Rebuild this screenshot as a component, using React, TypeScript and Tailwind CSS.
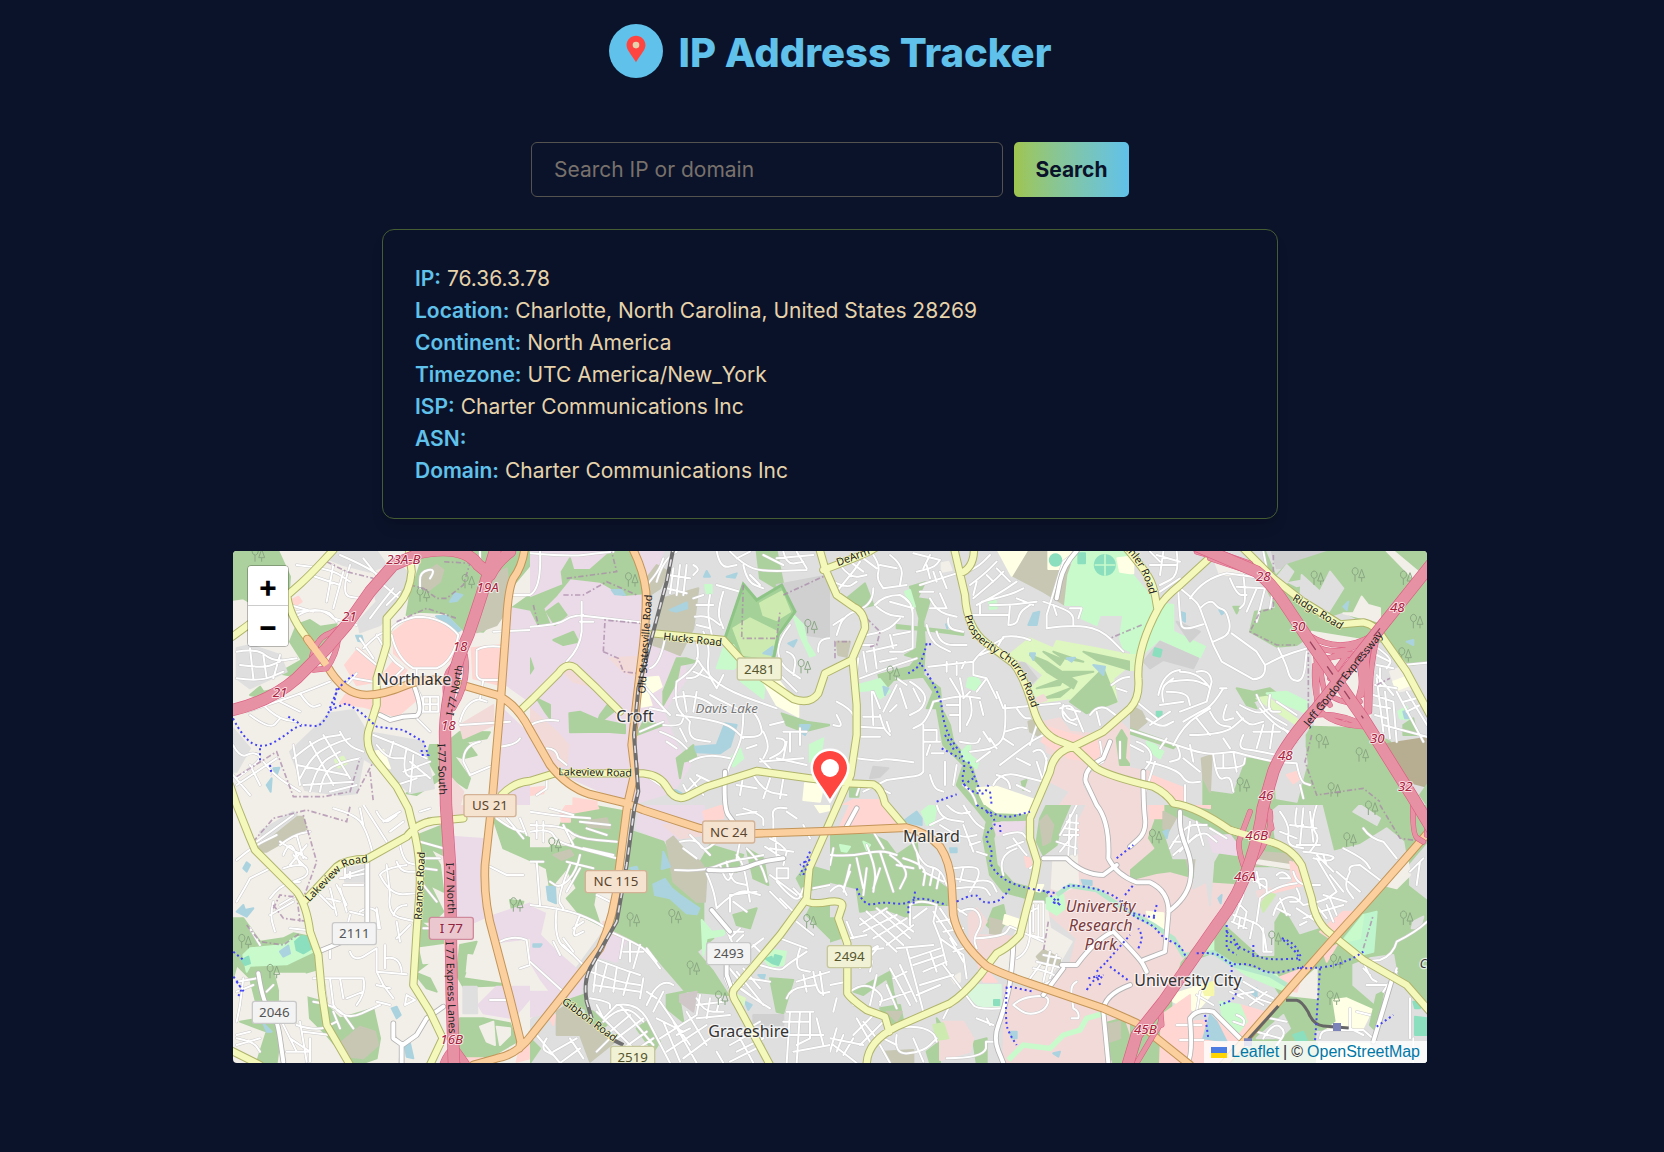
import React from "react";

const DETAILS: { label: string; value: string }[] = [
  { label: "IP:", value: "76.36.3.78" },
  { label: "Location:", value: "Charlotte, North Carolina, United States 28269" },
  { label: "Continent:", value: "North America" },
  { label: "Timezone:", value: "UTC America/New_York" },
  { label: "ISP:", value: "Charter Communications Inc" },
  { label: "ASN:", value: "" },
  { label: "Domain:", value: "Charter Communications Inc" },
];

/* Land colours of the map style */
const FOREST = "#add19e";
const HOMES = "#dfdfdf";
const LAND = "#f2efe9";
const INDUSTRY = "#ebdbe8";
const RETAIL = "#ffd6d1";
const OFFICE = "#f2dad9";
const PARK = "#c8facc";
const TEAL = "#8cdfbe";
const GOLF = "#def6c0";
const BARREN = "#c7c7b4";
const WATER = "#aad3df";
const SCHOOL = "#ffffe5";

type Tile = { x: number; y: number; base: string; areas: [string, string][]; streets: string };

/* The map is cut in eight tiles of 900 x 780 units; each has its own origin. */
const TILES: Tile[] = [
  {
    x: 0, y: 0, base: LAND,
    areas: [
      [FOREST, "M0 18H145L180 95 175 160 130 170 90 158 60 172 40 160 0 165Z"],
      [FOREST, "M550 18H900V60L850 120 830 180 760 260 700 255 650 205 570 200 530 210 540 150 570 60Z"],
      [FOREST, "M180 290L200 240 240 225 270 245 320 238 250 330 250 350 200 395 145 385 215 345Z"],
      [FOREST, "M60 450L90 425 100 440 150 430 110 460Z"],
      [FOREST, "M530 745L620 690 590 640 600 600 640 600 690 560 780 562 770 580 710 590 740 630 700 640 670 630 720 700 710 730 650 690 560 750Z"],
      [FOREST, "M830 200L900 150V270L840 330 870 260Z"],
      [BARREN, "M570 95L620 60 640 75 630 110 590 140 575 120Z"],
      [BARREN, "M790 90L830 70 840 180 800 240 740 262 740 190Z"],
      [HOMES, "M300 18H440L470 60 420 80 340 60 290 40Z"],
      [HOMES, "M430 130L510 60 540 90 520 170 450 240 390 262 385 230 440 170Z"],
      [HOMES, "M20 310L60 300 150 330 170 380 60 430 20 400Z"],
      [HOMES, "M180 620L300 505 370 495 410 560 580 590 612 730 540 745 480 690 400 640 380 745 330 750 225 735Z"],
      [HOMES, "M9 550L60 610 20 680 9 680Z"],
      [RETAIL, "M490 262L540 222 620 225 682 270 672 335 625 370 540 368 492 325Z"],
      [RETAIL, "M345 360L385 310 440 360 430 412 380 420Z"],
      [RETAIL, "M330 475L350 445 400 460 560 420 562 462 500 515 450 500 400 485Z"],
      [RETAIL, "M450 400L490 350 530 375 500 420Z"],
      [RETAIL, "M725 310L815 300 810 420 730 400Z"],
      [RETAIL, "M175 170L205 155 215 170 190 185Z"],
      [INDUSTRY, "M845 190L900 200V470L830 420Z"],
      [INDUSTRY, "M815 490L900 570V780H790Z"],
      [OFFICE, "M690 540L790 480 790 540 700 580Z"],
      [OFFICE, "M665 700L700 740 690 780H665Z"],
      [WATER, "M618 214L650 212 692 255 680 262Z"],
      [WATER, "M660 170L675 145 697 150 680 168Z"],
      [WATER, "M378 272L395 272 400 290 385 288Z"],
      [WATER, "M110 720L125 700 122 740Z"],
      [WATER, "M130 670L148 668 140 690Z"],
      [SCHOOL, "M430 620L460 615 480 670 450 660Z"],
      [GOLF, "M315 645L340 635 350 655 325 668Z"],
    ],
    streets:
      "M200 60L300 70 360 110 M310 60L290 170 M340 80L310 190 M240 90L330 120 M360 60L330 150 390 160 M400 40L440 90 M330 30L400 60 460 100 " +
      "M190 220Q260 170 310 220L380 240 M200 200L290 190 320 230 M180 180L250 200 M420 220L450 180 490 130 M470 180L510 140 M460 120L520 170 " +
      "M400 310L440 270 470 260 M390 280L430 340 M380 310L440 360 M20 320L80 310 130 350 200 340 M30 360L100 370 150 350 M60 310L70 400 M100 330L110 400 M20 400L90 410 160 380 M150 330L130 400 " +
      "M50 500L110 480 200 450 300 410 M60 510L120 555 150 520 M100 480L140 520 200 530 M150 470L210 500 M210 445L240 490 270 480 M380 385L340 430 M370 400L430 410 M480 260Q490 230 560 215Q640 215 685 270Q670 350 620 370L550 370Q500 340 485 270 " +
      "M440 270L480 340 520 370 M520 370L470 420 M560 370L560 430 Q600 500 560 512L520 515 480 525 450 510 M580 455H625V500H580Z M600 455V500 M580 478H625 M560 520L600 560 " +
      "M190 640L260 580 330 570 M210 700L240 640 300 600 360 580 M240 740L260 660 330 620 M270 740L280 680 340 650 390 640 M200 660L350 690 M190 600L210 720 M240 590L310 720 M280 570L360 700 M330 560L350 600 400 620 M220 720L370 710 M300 740L380 720 " +
      "M430 570L480 590 530 610 590 640 M440 600L470 640 520 640 M490 590L480 630 M530 610L510 700 590 690 M540 650L600 700 M550 630L540 740 M520 680L600 650 M500 720L560 700 " +
      "M740 320V390Q745 405 760 405H810 M740 315Q760 300 815 305 M690 530L700 490 740 460 770 470 M760 405L750 460 M690 540L840 530 M750 590Q700 600 700 650L720 690 780 665 M870 580Q860 600 810 605 " +
      "M9 600L30 640 70 620 100 640 20 700 M20 720L140 640 M60 660L90 720 M100 650L130 690 210 740 M9 690L60 750 M750 20V80 M850 150H900 M600 100L620 70 570 80 570 130 M790 260L900 255",
  },
  {
    x: 900, y: 0, base: HOMES,
    areas: [
      [INDUSTRY, "M0 18H320L400 18 350 160 360 300 460 340 470 400 400 500 440 600 480 660 430 740 300 780H0Z"],
      [FOREST, "M95 80L120 40 130 75 180 75 245 18H305L325 60 345 145 280 150 210 110 120 100 80 150 40 190 60 240 25 240 0 190V160L100 120Z"],
      [FOREST, "M50 200L85 175 110 210 75 240Z"],
      [FOREST, "M70 285L130 260 145 290 100 300Z"],
      [FOREST, "M0 340L10 370 0 385Z"],
      [FOREST, "M118 505L150 500 200 522 285 540 285 565 230 560 120 562Z"],
      [FOREST, "M240 470L250 500 200 540 210 510Z"],
      [FOREST, "M20 460L60 480 60 520 45 500Z"],
      [FOREST, "M440 340L470 340 500 350 450 360 440 410 400 480 400 440Z"],
      [FOREST, "M440 640L490 600 500 640 460 650 450 700Z"],
      [FOREST, "M680 18H740L760 120 740 130 690 100 Z"],
      [FOREST, "M755 505L830 530 900 540 820 560 770 540Z"],
      [FOREST, "M320 570L400 540 340 530Z"],
      [BARREN, "M400 160L505 130 490 250 450 330 400 310 370 300Z"],
      [BARREN, "M350 100L380 60 415 80 390 130 360 150Z"],
      [OFFICE, "M0 490L80 560 115 600 110 660 60 670 0 560Z"],
      [OFFICE, "M90 370L130 365 170 420 130 410Z"],
      [OFFICE, "M240 340L320 335 310 390 280 380Z"],
      [LAND, "M0 700L110 700 200 740 300 780H0Z"],
      [RETAIL, "M0 730L45 725 40 745 0 750Z"],
      [RETAIL, "M130 760L200 770V780H130Z"],
      ["#d0d0d0", "M740 120L900 90V280L830 270 790 210Z"],
      ["#a3d197", "M585 280L640 118 680 165 755 120 795 200 745 270 730 345 640 335Z"],
      ["#cdebb0", "M690 175L755 140 780 200 740 225 700 210Z"],
      ["#cdebb0", "M610 250L660 220 740 260 720 340 640 330Z"],
      [PARK, "M560 370L580 310 610 300 640 350 610 372Z"],
      [PARK, "M632 408H705L700 460Z"],
      [PARK, "M790 210L820 240 830 290 855 330 840 335 810 270Z"],
      [PARK, "M525 120L545 120 545 145 530 145Z"],
      [PARK, "M600 640L630 610 640 640 610 665Z"],
      [PARK, "M840 600L880 580 870 640 840 650Z"],
      [SCHOOL, "M700 410L745 405 805 480V515L740 480Z"],
      [SCHOOL, "M335 400L385 395 395 425 355 450 365 480 335 485Z"],
      [SCHOOL, "M825 715L880 720 870 770 820 765Z"],
      [WATER, "M495 605L560 600 585 535 620 540 600 605 570 625 500 622Z"],
      [WATER, "M420 195L470 172 472 190 440 200Z"],
      [WATER, "M245 135L275 135 285 150 255 148Z"],
      [WATER, "M810 540L840 540 825 570 810 560Z"],
      [WATER, "M522 95L530 78 540 95ZM590 95L620 85 615 98ZM775 295L800 285 790 305ZM700 325L728 305 725 330Z"],
      [WATER, "M435 735L455 745 440 755Z"],
    ],
    streets:
      "M0 25L120 35 200 25 250 20 M30 20Q35 130 0 150 M0 245L80 240 120 215 160 210 M155 170L155 260Q150 310 110 350 M150 230H190 M160 212L330 232 M0 540Q40 520 85 527 M50 610Q80 610 85 640L110 660 " +
      "M415 90L480 100 M410 130L470 145 M430 70L420 145 M450 60L440 150 M470 60L460 150 M380 110Q400 40 440 20 M355 115L385 80 400 40 M490 60L510 70 490 90 " +
      "M560 18L570 70 620 60 M600 20L640 60 700 80 830 75 M640 60L650 110 700 130 M660 90L690 120 M620 40L660 20 M700 30L760 60 M760 20L770 60 820 50 M800 20L830 70 M740 40L850 30 " +
      "M495 215L530 210 570 240 M500 180L550 180 M540 150L530 200 550 290 M580 140L560 200 580 250 M560 120L630 140 M520 260L540 300 530 380 560 430 M490 160L520 150 M500 240L540 250 " +
      "M405 280Q390 360 360 370 M500 290L510 340 480 380 440 410 M440 410L430 480 480 530 M500 340L530 390 600 440 740 490 M470 400L500 400 520 370 M490 380L540 400 M560 430L580 390 " +
      "M430 460L460 450 520 460 560 490 500 500 M460 440L470 500 M500 440L490 500 M540 450L600 480 640 500 M440 510L520 520 600 540 640 580 M480 530L470 580 540 590 M450 550L470 590 " +
      "M340 420L400 490 420 510 M360 490L410 500 M390 560L440 580 470 610 M400 540L450 545 460 520 M410 590L440 610 M330 560L400 530 " +
      "M640 500L640 570 610 640 590 680 580 770 M640 575L700 580 690 530 670 500 M700 560L720 600 700 640 M680 600L650 610 M720 540L760 530 M740 580L770 580 760 620 720 640 M760 560H830 M770 590L760 640 M810 550V600 M740 640L830 660 M690 640L740 690 M780 560V620 " +
      "M460 720L480 760 M480 700L520 750 M500 690L560 720 M470 740L510 700 M640 690L630 750 M670 690L700 740 770 750 M720 700L700 760 M620 720L680 730 M760 700L750 760 " +
      "M780 240L740 290 750 360 810 400 M770 320L800 330 790 390 M740 380L800 440 M865 320Q860 280 900 280 M690 650L820 640 M480 650Q530 620 600 640 M50 700V730L20 750 M360 700Q420 740 450 760",
  },
  {
    x: 1800, y: 0, base: HOMES,
    areas: [
      [FOREST, "M50 160L105 115 130 180 90 190Z"],
      [FOREST, "M240 125L285 112 262 160 300 165 280 230 285 300 280 390 330 430 335 490 360 540 370 590 425 660 442 720 480 780H430L380 720 400 660 340 600 320 490 290 490 310 440 280 395 190 405 160 440 145 390 240 365 260 340 225 330 260 310 268 220Z"],
      [FOREST, "M200 240L400 262V270L280 255 200 250Z"],
      [PARK, "M85 420L150 402 180 440 150 460 130 435 90 438Z"],
      [PARK, "M395 620L420 595 420 630 445 650 440 670 400 640Z"],
      [PARK, "M415 400L440 395 452 415 435 435 410 425Z"],
      [PARK, "M475 160L495 150 500 190 480 192Z"],
      [PARK, "M225 140L240 135 255 185 240 180Z"],
      ["#d0d0d0", "M120 700L130 665 175 670 150 695Z"],
      ["#d0d0d0", "M580 350L620 400 600 420 560 360Z"],
      [BARREN, "M545 90L590 18H660L700 60 720 60 705 180 640 140Z"],
      [BARREN, "M595 530L630 520 630 575 600 560Z"],
      [SCHOOL, "M505 18H590L545 92Z"],
      [SCHOOL, "M655 18H725L700 72H655Z"],
      [PARK, "M740 18H900V318L880 310 870 280 880 210 810 210 800 240 755 220V180L705 180 715 90Z"],
      [TEAL, "M745 25H765V55H745ZM825 30A30 30 0 1 1 824 30ZM677 28A17 17 0 1 1 676 28Z"],
      [SCHOOL, "M862 40L900 35V85L870 80Z"],
      [GOLF, "M530 335L600 280 670 310 680 288 800 310 900 330V360L850 400 860 470 780 500 720 460 630 472 605 430 640 390 590 350Z"],
      [FOREST, "M600 330L650 350 740 410 730 430 650 380ZM670 320L760 350 700 340ZM620 430L700 400 690 420ZM640 460L720 430 690 455ZM760 320L900 350V375L800 345ZM720 470L820 370 860 470 770 505ZM700 380L790 380 700 400ZM640 320L700 345 690 360Z"],
      [OFFICE, "M640 530L690 520 720 560 830 570 870 530 900 560V780H690L720 740 660 710 690 640 650 620Z"],
      [RETAIL, "M635 590L650 545 730 570 800 585 812 620 790 650 720 640Z"],
      [FOREST, "M860 580L875 555 890 580 885 640 900 660 870 660Z"],
      [OFFICE, "M610 465L640 450 650 465 620 475Z"],
      [SCHOOL, "M440 730L500 725 615 765 600 780H465Z"],
      [FOREST, "M575 710L590 705 580 735ZM60 730L90 725 85 755 60 755Z"],
      [LAND, "M335 55L355 50 365 75 335 80Z"],
      [BARREN, "M20 290L60 290 50 335 25 330Z"],
      [RETAIL, "M40 780L70 765 150 765 180 780Z"],
      [WATER, "M595 240L610 205 628 200 620 240ZM600 325L615 325 610 345ZM790 360L825 365 820 390ZM710 340L735 338 725 350ZM348 238L358 240 352 250ZM160 425L175 430 165 450Z"],
    ],
    streets:
      "M130 30L150 60 140 100 160 130 M100 40L140 70 M30 60L60 100 110 90 M10 110L50 130 80 110 M20 140L70 80 90 50 M130 130L130 180 40 210 20 270 M160 130L230 120 M180 30L220 60 210 120 M150 60L200 70 M60 50L100 80 " +
      "M140 185L170 210 220 215 M135 180Q160 150 210 150Q250 170 248 210V310L220 320 M180 170L250 190 M240 260L190 270 M220 320L180 320 M250 25L330 45 M260 80L310 70 330 45 M270 120L380 85 M300 30L280 70 M330 80L350 130 M310 80L320 110 M290 60L300 100 " +
      "M390 90L440 70 480 30 M420 120L460 90 500 50 M430 160L490 110 520 80 M440 180L500 150 560 110 M470 90L490 110 M500 70L540 110 M440 110L430 150 M455 170L540 150 580 130 M480 180L540 180 620 170 M560 160L610 180 M540 180L535 240 M415 210H535 M540 240L560 240 570 200 600 180 M450 180V210 " +
      "M300 160L320 200 380 215 M330 145L350 190 M300 190L350 190 M290 240L300 290 360 320 M320 260L330 300 410 300 M270 140L310 140 M355 220L350 250 400 260 M430 350L450 320 520 280 M430 350V390L470 400 490 440 500 460 M295 365L430 350 M350 350V380 M380 350V390 M405 350L395 370 M390 400L400 450 M310 470L390 450 450 460 M360 400L390 450V560 M420 440L400 460 " +
      "M450 330L500 310 520 275 Q570 270 600 285 M470 400L440 440 M350 480H385 M420 460L430 500 410 540 M450 470L460 510 M360 510H390 M520 490L500 440 M525 480L530 560 500 610 420 620 M525 490L690 475 M560 490L580 520 600 520 M525 560L570 545 590 550 M480 580L500 610 M460 560L480 590 M390 590L440 600 450 580 M440 650L480 620 M520 580L550 600 " +
      "M90 400L170 370 260 340 M85 340L80 380 M100 320L110 380 M130 300L140 370 M150 350L200 340 M110 270L170 260 210 220 M110 320L200 300 M180 270L190 310 M85 300L130 300 " +
      "M130 440L150 490 M160 500L200 420 M180 500L200 480 M210 430L230 490 M240 410L290 440 280 490 240 510 M250 430L270 470 M20 470L60 490 80 530 M10 540L40 550 20 510 M100 515H150 M125 440L130 540 M90 545L160 550 M95 575H150 M150 510L160 550 180 570 M170 530L180 560 M200 400L230 420 " +
      "M310 470L290 530 250 550 M280 540V680Q270 695 240 695L170 705 100 740 M280 555H320V590 M280 590H330 M300 600L290 630 M305 625L340 625 M80 640L150 650 160 640 250 652 M345 650V720 M380 660L370 720 M300 690L310 730 340 740 M80 750L90 720 M110 710L180 745 M400 720Q430 740 440 780 " +
      "M640 170L700 190 730 210 730 240 M670 180L680 210 M650 250V210L690 80 700 50 740 20 M650 250L720 240 810 250 880 320 M620 540L600 600 M510 660L600 590 640 570 M490 720Q510 680 560 690L640 710 620 650 M610 620Q640 600 650 650V690 M500 690Q540 700 540 730 M560 720L600 740 M560 640L600 660 M640 700L650 640 " +
      "M690 490Q720 470 735 500L760 560 M700 500L720 530 740 520 M700 480L690 520 740 540 M710 490L750 500 M780 510Q800 480 830 490L870 520 M800 500L810 540 M845 420L870 400 900 395 M860 430L890 440 M720 190H755L745 220 M810 590L820 650Q760 680 765 720Q780 750 800 780 M870 590V640 M40 220L10 240",
  },
  {
    x: 2700, y: 0, base: HOMES,
    areas: [
      [PARK, "M0 80L50 140 90 175 130 180 130 260 225 305 210 337 90 282 40 325 0 325Z"],
      ["#d0d0d0", "M90 290L205 340 190 370 100 345 60 370 40 350ZM180 290L140 230 210 260Z"],
      [LAND, "M255 50L340 80 340 90 270 90Z"],
      [FOREST, "M405 18L440 100 500 130 640 100 620 160 560 220 620 240 700 230 750 240V290L640 310 560 260 500 300 440 305 360 260 375 200 440 190 410 130Z"],
      ["#d0d0d0", "M425 18H600L540 60 440 70Z"],
      [FOREST, "M600 18H900V350L840 360 770 290 740 250 640 200 580 220 510 170 520 100 460 110 430 100 470 60Z"],
      [HOMES, "M515 90L570 140 600 80 640 130 590 210 510 180Z"],
      [HOMES, "M430 110L470 60 490 80 460 130Z"],
      [LAND, "M640 205L670 205 695 155 715 180 750 190 750 230 700 220Z"],
      [LAND, "M545 260L730 290 720 530 555 560Z"],
      [LAND, "M780 380L830 360 860 430 800 440Z"],
      [SCHOOL, "M790 410L830 395 840 420 800 435Z"],
      [LAND, "M770 18H790L870 85 850 100Z"],
      [FOREST, "M320 430L370 440 420 430 440 445 370 470 380 490 350 480Z"],
      [PARK, "M410 445L470 440 530 470 530 505 460 475Z"],
      [GOLF, "M380 460L410 455 510 530 500 540Z"],
      [BARREN, "M0 480L35 500 50 530 20 555 0 545Z"],
      [FOREST, "M0 550L140 600 130 610 0 565Z"],
      [FOREST, "M545 545L700 550 780 590 850 780H385L430 660 530 650 530 570Z"],
      [FOREST, "M350 640L425 650 390 780H220V640L240 740 310 750Z"],
      [BARREN, "M215 640L245 630 240 740 220 700Z"],
      [HOMES, "M430 600L525 610 530 655 500 770 440 760Z"],
      [RETAIL, "M470 690L500 680 510 700 490 715Z"],
      ["#b7ae91", "M765 598L891 578V725L840 712Z"],
      [FOREST, "M870 750L891 720V780Z"],
      [OFFICE, "M0 670L60 680 40 780H0Z"],
      [RETAIL, "M60 690L165 730 160 775 110 760 50 720Z"],
      [GOLF, "M0 330L20 330 15 375 0 375Z"],
      [SCHOOL, "M0 18L10 30 10 85 0 85Z"],
      [PARK, "M50 590L75 600 100 620 90 640 60 620ZM805 500L830 485 840 525 810 520Z"],
      [FOREST, "M820 540L850 520 860 570 820 570ZM310 185L330 185 320 205Z"],
      [WATER, "M150 200L165 205 165 230 152 220ZM640 185L655 170 650 195ZM830 290L850 285 850 300ZM820 500L838 495 835 520 825 520ZM268 195L285 200 275 208Z"],
      [TEAL, "M75 310L95 315 90 335 70 330ZM80 500L95 500 95 518 80 518Z"],
    ],
    streets:
      "M80 30L150 50 M60 60L140 60 M100 20L90 90 M140 20L150 90 90 120 M60 20L90 50 M90 140L150 100 M145 140L150 230 160 255 220 238 M150 130L200 170 210 190 M210 190L240 160 265 190 290 195 305 265 250 290 M210 190L250 300 275 350 370 403Q410 400 405 360L380 320 305 265 M180 160Q220 100 290 85L400 100 M320 125L400 130 M340 90L350 170 330 190 M380 130L350 200 M405 130L380 230 M300 100L320 150 350 150 M430 130L420 190 M405 360L450 335 530 310 M445 310L470 360 480 405 520 410 530 320 " +
      "M85 450Q100 380 150 375 M100 470L90 430 130 400 M120 410L180 400 230 420 M200 380Q240 370 245 410L230 470 150 500 M150 380Q210 380 240 430 M110 440L170 440 180 480 M90 480L160 470 M60 540L120 500 M270 430H290 M280 430L250 480 210 500 160 530 M50 520L90 550 130 530 M130 600L160 540 240 490 M180 570L280 570 340 520 M200 520L240 570 M240 500L260 540 300 545 M290 480L270 530 310 520 M330 480L380 510 420 490 M320 500L350 545 400 530 M380 450L400 500 470 540 M420 450L410 500 450 500 M440 470L500 510 M390 490L430 540 500 570 M370 560L450 560 M400 540L380 610 M430 540L420 610 M340 570L320 610 370 615 440 630 M460 550L500 590 M280 580L300 610 " +
      "M20 470L80 520 M0 555L140 600 230 630 310 620 M310 620L420 650 500 655 M250 630L260 710 300 690 310 740 M260 670L340 670 345 640 M280 630V670 M310 620L320 680 M20 590L50 600 70 640 40 680 M0 600L40 620 M50 650L140 670 170 715 210 710 M140 600L160 640 120 650 M160 640L210 680 M75 650L40 760 M180 600L190 650 M90 610L110 580 M165 720V780 " +
      "M500 655L510 710 540 720 M510 720L520 760 M730 300L790 340 770 370 M740 330L780 350 M740 360L790 370 M820 360L891 353 M740 390L790 450 M735 420L800 430 M730 450L790 470 M730 480L780 490 M735 510L770 520 M740 400L760 560 M765 440L780 580 M790 470L800 590 M800 440L880 590 M760 540L891 575 M830 440L891 540 M820 470L860 460 M830 500L870 480 M750 370V420 M400 20L410 70",
  },
  {
    x: 0, y: 780, base: LAND,
    areas: [
      [FOREST, "M9 340L40 340 90 410 160 400 190 385 240 395 270 520 280 590 330 640 430 610 450 700 440 760 400 774H360L290 690 240 640 230 500 130 500 160 620 140 774H80L110 680 30 650 90 640 60 520 20 480 9 520Z"],
      [PARK, "M40 450L60 430 160 420 200 395 240 400 250 440 170 478 60 482 50 500Z"],
      [TEAL, "M195 410L215 393 240 398 245 430 220 445 200 435ZM35 465L55 455 60 475 45 480Z"],
      [WATER, "M150 440L175 422 180 445 160 455ZM20 320L40 300 45 315 70 310 50 335ZM40 190L50 172 60 180 50 200ZM485 610L500 605 512 630 500 640ZM525 725L540 715 550 760 530 755ZM100 655L125 680 110 680ZM690 425L708 425 705 435 690 432Z"],
      [BARREN, "M70 140L200 35 218 35 230 72 110 140Z"],
      [BARREN, "M330 715L390 665 435 680 445 720 400 760 360 755Z"],
      [HOMES, "M90 80L190 20 200 30 100 110ZM345 190L410 180 410 230 345 230Z"],
      [LAND, "M225 510L260 500 265 580 230 570ZM150 560L230 620 180 700 150 680Z"],
      [FOREST, "M565 90L640 60 640 150 600 130 630 180 640 260 600 240 640 320 610 350 570 350 640 400V440L560 500 570 400 560 300Z"],
      [FOREST, "M550 500L600 520 620 560 590 550ZM690 420L740 410 700 520 840 540 700 545 680 510ZM690 640L760 640 840 655 860 710 750 774H690ZM840 285L880 290 870 320 845 310ZM790 40L900 100V165L820 130Z"],
      [LAND, "M570 430L640 420 640 470 580 475ZM715 450L790 460 740 515 710 500ZM750 665L790 650 795 720 770 710ZM800 665L840 670 840 690 810 720Z"],
      [INDUSTRY, "M665 95L760 102 755 230 780 330 680 375ZM780 335L900 295V400L800 412ZM745 600L800 545 900 545V580L850 640 760 625Z"],
      [OFFICE, "M665 0H700V30L665 45Z"],
      [HOMES, "M700 545L740 545 742 625 700 625Z"],
      [RETAIL, "M870 730L900 710V760L860 770ZM700 760L760 760V774H700Z"],
    ],
    streets:
      "M20 165L60 130 140 90 M80 110L190 30 M20 290Q50 240 60 220L120 190 M150 120L190 90 240 80 M160 150L180 100 210 180 M180 180L230 120 M190 150L230 190 M150 110L230 160 M160 190L220 170 240 210 190 230 M200 90L220 160 " +
      "M120 280L150 240 210 230 M130 290L120 330 135 380 M120 330L190 290 M180 370L230 375 M150 300L200 270 M310 10L380 30 410 80 430 150 M390 10L400 60 M400 0L470 110 M440 20L460 60 500 30 M460 50L510 20 M480 80L520 50 M510 120L520 170 560 180 M540 60L600 40 M570 20L600 10 " +
      "M412 170V400 M340 240L400 240 M330 220L410 205 M360 220V200 M300 250L320 330 M270 270L310 310 M290 280L330 290 M320 240L350 300 M345 170V220 M350 210L410 190 M330 250L350 320 M390 320Q420 300 440 320L445 370 M450 210L480 270 560 265 M470 180L480 270 M500 170L510 200 560 200 M450 210Q460 190 530 180 M480 270L470 330 560 350 M490 330Q500 300 530 300 M500 350L510 410 M500 400L540 360 " +
      "M360 320L400 330 M360 330L350 370 M440 310L450 370 M265 440L350 405 M360 440Q370 470 400 455L440 430 440 500 530 508 M465 420V490 M465 460Q510 450 515 500 M440 500L460 540 M300 430V460 M250 520L400 520Q410 560 380 600 M300 520L310 600 M330 520L340 580 M250 590L320 600 370 670 M310 600L340 650 450 600 M350 580L400 560 M280 530L290 590 M460 540L490 580 M440 540L480 550 M440 590L480 600 M525 600L530 570 555 585Z " +
      "M85 505L100 600 140 630 160 770 M20 530L80 520 M20 560L70 540 M110 560L130 540 M30 600L20 650 M40 520L30 600 M110 620L150 590 M150 640L200 740 M210 650L230 770 M200 660L260 680 320 650 M220 680L300 690 M310 620L330 670 M180 700L240 740 M170 740H240 M20 700L70 710 90 740 M20 690L60 680 M240 700V770 M20 720L90 700 " +
      "M490 655L490 700 520 720 560 690 590 640 640 605 M515 720L510 774 M570 160H630 M580 190L620 195 M570 110L640 130 M580 240L620 290 M580 370H640 M780 185L830 210H880 M810 410Q850 390 890 405L900 480 870 490 M780 585H840 M800 40L840 70 880 80 M830 40L880 100 M870 40L890 90 M60 370L90 420",
  },
  {
    x: 900, y: 780, base: HOMES,
    areas: [
      [LAND, "M0 0H290L260 190 220 370 80 560 0 640Z"],
      [FOREST, "M100 40L180 0 290 20 260 190 200 240 190 300 210 360 150 330 110 280 140 250 110 190 60 250 50 190 0 165V130L60 130Z"],
      [RETAIL, "M92 25L110 0H200L205 10 120 25 120 50 95 50Z"],
      [BARREN, "M70 150L120 135 130 150 95 165ZM160 50L230 40 240 70 180 65Z"],
      [LAND, "M0 60L60 60 140 90 110 120 0 110Z"],
      [INDUSTRY, "M330 0H520L530 50 480 90 400 110 320 70ZM0 305L45 325 30 390 80 440 160 510 150 570 90 590 50 625 0 635V560L60 560 30 520 0 470ZM220 390L300 380 260 470 190 450Z"],
      [OFFICE, "M220 350L300 385 290 400 220 380ZM400 60L500 60 520 90 450 100Z"],
      [FOREST, "M310 80L400 110 440 190 520 280 520 380 550 400 500 440 550 500 595 570 465 558 380 460 300 400 240 370 280 240Z"],
      [FOREST, "M540 120L640 150 620 200 550 180 500 190ZM610 330L680 310 660 370 620 360ZM650 130L700 160 715 240 670 220ZM410 570L470 558 450 590 460 650 410 610ZM720 520L790 525 760 625 740 620ZM800 220L830 180 900 200V240L820 260ZM830 330L850 290 900 300V400ZM100 590L160 570 180 700 230 660 190 620ZM320 670L350 650 390 710 370 740ZM0 700L30 730 0 774Z"],
      [BARREN, "M410 110L430 95 460 130 510 170 530 200 525 290 500 290 430 230Z"],
      [BARREN, "M80 620L110 600 190 660 255 710 180 770 150 690 80 690Z"],
      ["#d0c8c8", "M450 570L500 560 490 620 450 590Z"],
      ["#d0d0d0", "M670 630H760V660H670Z"],
      [RETAIL, "M520 20L580 0 580 40 525 45ZM60 640L75 630 70 660Z"],
      [WATER, "M370 238L405 222 425 250 450 270 508 310 500 328 470 325 420 280 375 270ZM400 140L420 185 395 192ZM50 245L75 245 78 295 55 285ZM300 190L320 185 325 200ZM645 590L665 600 655 615ZM685 510L705 510 700 525ZM10 418L35 418 30 425 10 425Z"],
      [PARK, "M515 345L545 380 590 375 580 390 530 400 520 450ZM700 460L730 435 768 440 760 480 720 485Z"],
      [TEAL, "M708 462L725 455 728 475ZM735 450L755 455 745 480 728 475Z"],
      [GOLF, "M620 570L645 580 640 600Z"],
      [SCHOOL, "M855 0H900V15L870 22Z"],
    ],
    streets:
      "M0 60L100 60 140 100 260 110 M0 80L60 70 80 110 150 130 260 160 M20 50V100 M40 50V110 M60 10L130 30 M100 60L130 120 M150 50L240 60 M170 70L230 90 M0 20L60 30 180 40 M160 130L250 150 M110 170L190 190 M150 150L140 200 90 250 60 230 M20 170L30 300 M120 180L80 280 100 310 M150 190L110 260 M0 170H40 M0 300L100 310 200 350 240 380 M80 310L70 400 130 450 M150 330L120 400 160 380 M100 400L130 440 M70 410L90 450 M160 350L130 370 M200 270L240 290 M220 240L250 250 M0 470L100 560 M100 420L170 490 M590 20L600 50 640 50 M590 0L595 40 M640 10L700 30 700 60 M620 30L680 20 M730 100V40Q720 0 770 10 M735 80L740 160 M720 100Q760 120 770 140L760 180 M705 125L760 160 M740 190H775V220H740Z M770 20L800 40 " +
      "M435 195L520 200 590 170 650 160 700 150 M530 205L550 250 560 310 M450 110L500 100 520 140 560 110 M460 130L500 160 M480 90L540 150 M570 180L590 240 610 200 M590 170L600 230 650 240 M620 150L640 170 660 290 M560 310L620 250 690 270 M600 320V270L680 260 M545 315L600 380 620 470 M600 400L630 370 M650 130L690 170 710 230 M630 110L620 160 M550 200L590 200 M610 290L650 320 " +
      "M585 460V520L605 570 M590 380L640 380 M620 410L640 390 M660 430L700 400 M590 520L640 560 720 610 M620 500L700 600 M590 480L640 540 M640 490L690 550 M605 570L620 540 660 570 M650 520L720 530 M670 420L700 450 M690 480L750 500 770 480 830 440 M750 400L830 430 M800 350L850 390 M810 430L790 490 840 500 M720 260L770 310 M740 230L800 300 820 250 M790 250L830 290 M750 280L790 320 " +
      "M240 380L330 420 360 450 390 490 M280 400L270 460 M300 410V470 M330 420L310 490 M280 440L340 440 M350 430L380 470 M190 460L270 490 330 510 M180 500L260 530 330 540 M200 470L190 560 M230 480L210 560 M260 490L250 560 M300 500L280 570 M340 520L330 580 M190 540L330 560 M180 580L240 590 240 610 M200 600L220 640 260 600 Q320 590 350 640L420 774 M220 650L250 620 300 610 340 650 M240 680L300 630 M260 700L340 640 M280 730L350 680 M200 620L310 730 M270 600L370 720 M310 740L370 700 M350 600L370 560 Q400 520 430 540 M370 620L400 560 M350 560L380 580 M390 590L480 720 M400 650L450 770 M430 650L500 774 M470 620L530 720 M390 700L500 630 M410 740L530 660 M460 760L540 700 M440 690L480 670 M380 640L460 680 M500 580L520 620 580 620 M510 570L500 630 M540 580L530 640 M570 580L560 620 M500 600L580 590 M500 640L600 630 " +
      "M770 580L780 550 860 540 M770 620H850 M780 620L770 774 M810 620L800 774 M840 620V700L800 720 M860 640L880 720 M760 650H840 M770 690H880 M790 740L900 720 M800 530L900 500 M820 510L830 560 M850 500L860 570 900 560 M870 500L880 570 M620 690L690 650 M600 720L690 670 M620 740L700 700 M600 770L700 720 M630 700L670 774 M20 690L90 774 M50 700L30 730 70 750 M70 740L140 700 M90 774L150 730 M120 700L160 760 M560 740L580 774 M200 740L240 700 M720 130L790 140 M820 60L840 100 M720 210L800 270 M850 250L900 240",
  },
  {
    x: 1800, y: 780, base: HOMES,
    areas: [
      [RETAIL, "M30 65L60 0H155L230 62Z"],
      [FOREST, "M0 90L130 90 170 110 200 150 260 110 270 190 350 250 360 300 240 300 240 340 160 310 90 320 80 250 0 230Z"],
      [FOREST, "M0 340L20 340 30 400 0 410ZM70 560L180 500 190 560 200 600 170 520 100 570ZM150 610L210 600 220 650 180 660ZM320 640L350 680 330 700ZM430 710L470 700 470 774H440ZM290 740L330 710 330 774H300ZM490 310L520 300 530 350 500 390 470 360Z"],
      [FOREST, "M430 0H480L510 20 600 30V50L510 45 490 100 500 180 550 235 650 260 650 300 590 280 520 260 480 210 460 100 470 50Z"],
      ["#c7c7b4", "M480 340L520 350 510 390 480 385ZM160 740L250 735V774H180ZM170 620L215 620 200 650Z"],
      [SCHOOL, "M470 0H610L600 25 500 22ZM525 330L570 345 560 370 520 355Z"],
      [INDUSTRY, "M490 55L590 50 570 80 500 90Z"],
      [RETAIL, "M585 155L600 160 610 190 590 185ZM440 460L500 530 460 530Z"],
      [OFFICE, "M415 330L440 310 470 350 440 390 560 395 500 450 460 470 420 420Z"],
      [FOREST, "M620 110L630 40 650 0H720L690 70 680 120 640 150Z"],
      [BARREN, "M630 50L650 30 670 60 660 110 640 120Z"],
      [OFFICE, "M770 0H900V780H520L525 540 640 560 720 480 740 400 660 330 670 170 750 150 740 60Z"],
      [LAND, "M670 165L740 150 745 240 700 260 665 250ZM600 290L650 300 660 370 725 410 690 470 640 540 560 520 480 475 540 420Z"],
      [BARREN, "M620 455L640 435 690 460 690 480 640 480Z"],
      ["#d8f7dd", "M410 570L440 540 512 540V605H450Z"],
      [TEAL, "M492 585H508V600H492Z"],
      [PARK, "M650 280L700 270 705 310 680 330 650 310ZM30 120L60 125 50 140 35 138ZM100 110L120 120 110 135ZM275 20L300 0H320L310 60 290 60Z"],
      [FOREST, "M825 655L880 640 900 700V774H850L830 720Z"],
      [BARREN, "M825 660L870 650 870 700 840 710Z"],
      [OFFICE, "M330 700L340 650 400 650 430 700 420 740 330 765Z"],
      ["#cdebb0", "M310 660L340 655 355 700 320 705Z"],
      [LAND, "M365 520L390 505 390 530 375 535Z"],
      [WATER, "M225 45L260 20 275 40 275 60 240 55ZM360 130L380 130 380 142 362 142ZM540 680L560 680 560 700 545 700ZM755 225L785 228 785 240 760 238ZM670 745L690 740 685 755Z"],
      [SCHOOL, "M610 240L640 240 630 260 610 255Z"],
    ],
    streets:
      "M0 150L60 155 150 135 200 150 M110 120L140 190 130 260 M80 160L100 250 M60 180L40 260 M150 140L170 200 190 260 M130 80L160 130 M10 130L0 180 M150 190L130 250 M110 190L100 270 M180 150L240 190 210 250 M220 160L290 180 280 240 M260 140L270 190 M200 180L250 190 M240 90L270 180 330 190 350 240 M280 200L340 230 M310 190L300 240 M330 200L320 250 M0 260L30 230 50 270 M60 200L40 250 " +
      "M320 0L330 40 400 50 M350 0L380 30 420 20 M400 0L430 50 460 70 M330 60L390 100 440 90 M400 60L430 140 M340 40L300 60 M370 190L440 180 450 210 420 260 M370 220L430 230 M380 250L460 240 480 270 M400 190L390 230 M430 230L480 220 500 260 M440 140L470 150 M420 120L450 110 " +
      "M520 90L570 75 590 100 M530 130L580 110 M520 210Q500 150 560 130 M550 100L580 140 590 150 M240 300Q270 280 320 300L310 350 330 400 400 450 M250 340L290 310 M240 360L240 300 " +
      "M90 340L200 440 M110 320L220 420 M140 310L240 400 M170 320L250 380 M90 360L170 310 M100 380L200 330 M130 400L230 340 M170 420L250 360 M200 430L310 420 M50 350L70 400 M60 400L110 390 M130 430L160 410 90 490 M80 470L130 450 120 500 M60 440L160 430 M230 430L280 620 M250 480L340 450 M240 460L330 430 M270 540L370 510 M260 570L330 540 M300 440L320 500 M280 500L350 470 M340 480L430 600Q440 615 520 610 M330 400L350 480 M310 320L380 420 M330 310L390 400 M320 350L380 340 M340 380L400 370 M390 320L430 300 460 350 430 400 440 430 M440 400L520 395 540 365 M400 450L410 520 M370 440L400 430 M410 330L380 310 " +
      "M180 490L240 600 M210 480L260 590 M190 520L230 500 M170 540L200 610 M140 510L120 600 M150 590L240 560 M60 560L100 530 160 570 150 600 M0 540L50 530 M70 600L50 570 M70 690L140 620 M90 720L170 640 M100 650L140 700 M80 640L120 710 M180 670L250 660 310 680 320 710 M200 690L190 750 280 740 320 700 M250 700L280 770 M150 720L180 774 M160 700L200 720 M20 740L40 690 M40 750L70 700 M0 700L100 720 M10 720L80 774 M350 760Q460 760 468 730V710H490 M20 670L0 740 M440 640L490 660 M470 640L480 660 M370 580L340 640 " +
      "M600 290H640V400L600 390V320L620 310 M610 300V380 M625 300V390 M540 365L640 410 M600 380Q600 440 560 460 M610 490L700 510 640 540 M620 470L700 490 M640 450L690 460 M630 480L600 520 M660 440L640 530 M680 450L660 520 M690 90L720 40 740 0 M680 110L740 130 M700 90H745 M705 70L745 75 M710 50L745 55 M720 30L715 150 M740 30L735 150 M690 140L730 90 " +
      "M550 600L570 580 640 570 660 585 640 620 590 630 550 600 M740 530Q720 540 725 570L730 610Q750 620 745 640H725 M600 190L640 160 M10 620L20 580 M360 400L400 470",
  },
  {
    x: 2700, y: 780, base: FOREST,
    areas: [
      [OFFICE, "M0 0H60L70 45 50 100 70 130 0 190ZM80 210L120 205 230 235 310 240 270 330 150 470 120 560 30 640 0 640V230L60 215Z"],
      [RETAIL, "M60 0H100V40H60Z"],
      [BARREN, "M100 20L230 90 230 180 180 200 150 100 100 70ZM380 140L500 150 490 200 430 180 380 180Z"],
      [HOMES, "M110 100L150 30 240 70 290 100 250 170 240 300 230 230 190 250 200 160 130 160Z"],
      [INDUSTRY, "M235 95L300 90 330 130 320 150 250 140Z"],
      [HOMES, "M425 20L450 0H575L610 140 690 120 770 70 820 110 830 170 770 230 710 300 620 350 510 385 460 300 430 350 430 450 390 450 290 360 370 190 430 190 480 200 500 150 440 120Z"],
      [HOMES, "M670 20L690 0 750 40 740 60ZM840 180L891 120V280L840 240Z"],
      [LAND, "M760 240L830 150 840 210 800 250ZM380 165L480 180 480 190 380 175Z"],
      [RETAIL, "M390 270L490 230 480 170 510 180 520 240 440 260ZM570 380L640 320 665 320 600 400ZM580 440L620 420 590 470ZM180 0H240V10Z"],
      ["#cdebb0", "M390 290L410 260 435 270 400 320Z"],
      ["#bff5cd", "M635 410L700 330 740 320 730 440 690 450Z"],
      [PARK, "M640 410L700 330 690 400ZM210 420L250 400 250 440 200 450Z"],
      [OFFICE, "M380 260L420 250 390 290Z"],
      [LAND, "M470 570L560 490 560 580Z"],
      [HOMES, "M190 470L260 445 300 480 400 500 450 580 350 700 270 774H130V560Z"],
      [SCHOOL, "M125 570L230 535 250 560 200 620 130 590Z"],
      ["#f6f7a8", "M215 545L250 530 250 570 225 570Z"],
      [RETAIL, "M95 630L180 570 180 650 300 640 330 600 400 620 360 700 290 774H90ZM440 520L520 490 500 560 450 550Z"],
      [OFFICE, "M0 540L100 560 30 650 0 640Z"],
      [PARK, "M270 590L330 600 350 650 320 690 280 650ZM320 490L440 510 470 560 420 540 350 510Z"],
      [WATER, "M240 630L220 700 290 710 260 650ZM360 560L380 550 380 575ZM265 280L275 270 272 295ZM100 80L115 75 110 100Z"],
      [SCHOOL, "M610 585L650 580 740 620 760 640 891 670V774H560L570 690 620 650ZM50 320L100 325 100 370 60 350Z"],
      [HOMES, "M670 480L720 460 790 450 800 510 891 600V774H760L700 680 740 600 670 540ZM850 350L880 335 870 370 845 370Z"],
      [FOREST, "M740 570L760 560 740 680 720 660Z"],
      [TEAL, "M855 635L891 640V690H855ZM490 690L520 680 530 705 500 710ZM850 590L870 590 870 610 855 610ZM455 640L480 670 460 680Z"],
      [HOMES, "M380 700L460 630 480 670 450 700ZM560 680L700 680 740 710 560 710Z"],
    ],
    streets:
      "M120 130L160 60 230 60 M130 150L200 90 M150 140L210 70 260 110 M180 50L170 130 M200 50L220 120 M130 110L180 110 M240 70L290 100 M560 0L540 60 570 100 540 140 M450 20L480 60 470 120 520 130 M500 10L490 70 520 60 M520 10L510 120 M540 20L550 110 M450 80L500 100 M480 60L560 70 M500 120L570 120 M520 140L620 150 600 170 550 160 M560 150L610 200 M580 150L590 180 " +
      "M700 70Q720 100 760 110L800 160 M660 200Q650 180 690 180L770 240 M660 200L640 240 670 280 M620 200L690 260 M600 210L640 260 M560 160L620 260 M640 130L700 160 720 190 M840 200L880 160 M870 170L860 240 M430 330L440 290 490 270 520 300 M440 310L480 330 M450 280L470 330 M500 250L520 290 480 290 M520 300L580 290 620 260 M550 290L590 340 M570 320L640 300 M600 280L620 330 M500 310L560 350 M520 340L550 330 M510 360L530 350 M580 270L650 290 M590 300L610 350 M440 210Q460 190 480 220 M490 200L500 240 570 240 M450 220L480 220 " +
      "M380 350L390 280Q440 240 500 235 M310 330L370 350 400 370 410 440 M320 290L350 320 M305 350L350 370 M340 270L310 350 M350 320L340 370 M330 340L325 370 M350 210L410 250 M380 200L390 250 M370 230L410 210 410 260 M400 370V440H425 M370 350L360 400 " +
      "M891 350Q860 380 800 410Q790 450 750 465L700 470 M700 470L720 520 740 530 M800 490L730 700 M700 490L720 510 M760 560L800 500 M710 540L780 540 M660 610V670L700 690 M680 620L720 630 M840 580V700 M850 700L850 774 " +
      "M300 530L350 570 400 600 M340 530L390 560 430 580 M320 570L370 560 M360 600L410 560 M300 560L340 580 M380 580L440 600 M180 660H215 M140 660H200 M150 705H220 M250 600L200 570 M200 620L210 560 M320 630Q350 640 340 660L310 650 M400 700L430 650 470 680 440 720 M380 680L450 700 M420 640L470 650 M570 700Q570 675 600 675H700L740 710 M660 620V660",
  },
];

/* Bends every plain polyline of a path into a rounded street. */
function rounded(d: string): string {
  return d
    .split("M")
    .filter((part) => part.trim() !== "")
    .map((part) => {
      if (/[A-KN-Z]/i.test(part.replace(/L/g, " "))) return `M${part}`;
      const n = part.replace(/L/g, " ").trim().split(/\s+/).map(Number);
      if (n.length < 6) return `M${part}`;
      let out = `M${n[0]} ${n[1]}`;
      for (let i = 2; i < n.length - 2; i += 2) {
        out += `Q${n[i]} ${n[i + 1]} ${(n[i] + n[i + 2]) / 2} ${(n[i + 1] + n[i + 3]) / 2}`;
      }
      return `${out}L${n[n.length - 2]} ${n[n.length - 1]}`;
    })
    .join(" ");
}

type RoadClass = { width: number; casing: number; paths: string[] };

const roads = (width: number, casing: number, paths: string[]): RoadClass => ({ width, casing, paths });

const TERTIARY = roads(12, 17, [
  "M555 430Q580 500 560 512L520 515 480 525 450 510",
  "M412 950V1180 M265 1220L350 1185",
  "M85 1285L100 1380 140 1410 160 1550",
  "M490 1435V1480L518 1500 560 1470 590 1420 640 1385 M515 1500V1554",
  "M1485 680L1480 790 1510 830 M1435 975L1520 980 1590 950 1660 940 M1445 1095L1500 1160 M1490 1240V1290L1510 1345",
  "M2440 940H2510Q2560 990 2620 990L2660 960 M2600 780Q2640 830 2635 940Q2660 990 2720 1012L2760 1012Q2820 1040 2815 1110L2805 1220 2740 1245 M2815 1100L2870 1060 2890 960 2850 860 2850 800",
  "M2740 680L2740 780 2750 860 2700 905 M2350 1200L2345 1300 2320 1400 2290 1480 2320 1554 M2495 1260L2540 1260Q2600 1180 2650 1160 M2650 1160L2730 1240 2750 1280 M2440 1350L2500 1270 M2700 1320Q2620 1350 2620 1400L2635 1554",
  "M2640 590L2620 640Q2560 670 2567 710L2600 780",
  "M2870 1554Q2890 1540 2880 1420Q2900 1390 2950 1400L3050 1500",
  "M3430 1490L3490 1290",
  "M2540 18L2500 60 2480 160",
  "M1850 845L1880 790",
]);

const SECONDARY = roads(19, 25, [
  "M0 280L110 200 180 145 240 90 310 15",
  "M172 155Q180 220 240 290",
  "M535 0L545 80Q540 140 505 180L470 220V300L440 400V480L415 560Q405 610 440 650L500 725 535 790 555 870Q575 960 568 1050L560 1160 550 1320 600 1400 638 1480 600 1560",
  "M0 720L20 780 60 880 75 915 200 1040Q230 1080 240 1160L265 1230 275 1340 290 1440 360 1560",
  "M222 1070L320 965Q350 942 410 942L530 875Q560 835 610 828L700 820 M815 750Q850 712 900 708L975 685H1240Q1290 690 1310 725Q1335 770 1370 755L1430 725 1580 678 1740 700 1860 715 1930 718Q1955 730 1965 775L2020 840",
  "M870 498L910 460 985 385Q1010 350 1035 368L1100 430 1170 500",
  "M1270 265L1480 285 1530 340 1600 400 1690 462Q1740 480 1765 445L1785 385 1865 345 1905 250Q1905 200 1870 185L1820 150 1785 70 1765 0",
  "M1780 75L1900 30 1950 0",
  "M1868 345L1880 480V570L1862 690 1840 740 1800 830 1738 970 1730 1060 1650 1170 1515 1330Q1500 1345 1520 1375L1550 1430 1620 1560",
  "M1730 1068Q1745 1080 1800 1070Q1845 1065 1835 1090L1825 1120 1852 1195V1345Q1860 1360 1910 1395L1965 1415 1978 1460",
  "M2170 0L2205 150Q2210 250 2270 295L2350 355Q2380 390 2410 490Q2430 560 2480 585L2530 605 2600 670Q2640 695 2770 725Q2810 745 2830 775Q2900 785 3000 855L3100 885Q3180 900 3215 960L3245 1060Q3255 1130 3300 1165L3400 1245 3530 1320 3600 1400",
  "M2232 0Q2235 70 2190 85",
  "M2530 605Q2470 620 2460 680L2400 820V880L2422 950Q2415 1000 2390 1090L2370 1170Q2340 1205 2300 1225L2250 1290Q2200 1350 2160 1375L2000 1445Q1910 1490 1910 1560",
  "M2530 605L2620 560 2700 490Q2730 460 2725 400Q2720 310 2785 190Q2800 160 2850 120L2970 10",
  "M2690 10L2740 70 2770 120 2782 190",
  "M3040 10L3130 100 3220 170 3330 238 3400 232Q3440 240 3460 280L3530 380 3600 510",
  "M0 1515L90 1560",
]);

const PRIMARY = roads(20, 26, [
  "M885 0Q880 60 850 100Q835 130 830 220L812 470 788 750 765 960Q760 1070 790 1170L840 1360 872 1490 868 1510",
  "M232 282L290 360Q340 450 410 450Q460 450 530 420Q600 390 690 418L800 450Q860 475 900 555L960 660Q1010 725 1080 748L1190 775 1240 795 1410 850 1500 868 1800 858 2030 848Q2090 860 2130 905Q2160 950 2165 1020L2170 1110Q2185 1190 2270 1263Q2310 1285 2400 1315L2620 1390 2700 1425Q2740 1440 2780 1480L2880 1560",
  "M1202 0Q1240 70 1248 140Q1250 200 1240 300L1222 450 1205 600 1215 680 1192 780 1165 990Q1155 1110 1110 1210L1000 1350 905 1470Q860 1530 800 1540L730 1560",
  "M3610 845L3440 1040 3320 1170 3170 1340 3050 1480 2970 1570",
]);

const MOTORWAY = roads(33, 37, [
  "M0 497Q120 470 200 400L290 310 350 240 420 140 490 60 560 30 M560 25Q700 -5 745 60L770 80",
  "M800 0Q760 140 715 270Q650 410 645 560L648 780 660 960 665 1350 672 1560",
  "M840 20Q800 50 780 90",
  "M3610 50L3450 250 3260 490Q3160 600 3130 680L3098 790Q3090 860 3060 950Q3030 1050 2960 1140L2800 1370 2720 1470 2690 1570",
  "M2870 -10L3080 80Q3120 110 3160 170L3240 290 3400 520 3550 760 3610 860",
]);

const RAMPS = roads(14, 17, [
  "M240 370Q250 280 300 265L345 240 M250 375L290 370Q320 330 325 280",
  "M700 320L655 380Q640 410 650 470 M705 330Q720 410 670 490 M690 330L660 400",
  "M3060 800L3030 880Q3020 900 3040 960 M3120 800Q3130 880 3060 960 M3110 780L3125 850",
  "M650 1554L665 1500 700 1554 M638 1554L665 1490 710 1554",
  "M2780 1400Q2810 1420 2770 1470L2720 1554 M2790 1380L2795 1440",
  "M3220 270Q3260 300 3260 360V500 M3235 270Q3330 330 3430 270 M3250 300Q3340 350 3440 260 M3420 290L3410 350V500 M3440 280L3422 360 3418 500 M3265 490Q3300 540 3410 545 M3250 510Q3330 500 3420 550 M3270 360Q3280 450 3300 480 M3255 360Q3250 440 3270 490 M3280 350Q3340 310 3380 340 M3300 400L3350 330 M3380 330L3400 400 3385 460 M3400 330L3395 450 M3300 450Q3340 480 3390 470 M3290 340L3400 320",
  "M2900 0L3060 55 M2940 40L3060 80 M2900 20L3040 60",
  "M3550 760L3545 870 3580 890 M3600 780L3590 870",
]);

const RAIL = [
  "M1332 0L1310 110 1270 260 1225 430 1212 570 1225 740 1213 790 1190 960 1160 1130 1080 1270Q1060 1310 1070 1370L1085 1420",
  "M1150 1485L1180 1500",
];

const FOOTPATHS =
  "M9 520L40 580 95 610 155 580 210 535 280 550 320 430 370 390 M300 495L350 475 390 500 440 545 520 555 580 590 595 630H575V610 M320 430L310 490 M175 515L215 540 M90 610V650 M120 660L125 690 " +
  "M10 1220L40 1245 M10 1295L40 1330 20 1360 M20 1310L45 1345 " +
  "M1740 920L1710 990 M1725 950L1710 960 M1720 990L1740 940 " +
  "M2090 295L2075 360 2035 385 M2075 360L2130 440 2140 530 2160 580 2210 650 2190 720 2260 755 2275 720 M2145 570L2175 620 M2135 610L2190 640 M2215 650L2240 710 2250 740 M2200 720L2230 700 M2120 770L2180 748 M2100 295V310 M2280 740L2285 780 " +
  "M2240 780L2310 825 2400 800 M2270 800L2310 830 2260 870 2290 920 2275 960 2340 1020 2480 1045 M2310 840L2312 870 M1880 1030L1900 1085 1960 1070 2020 1080 2070 1055 2150 1080 M2035 1105V1070 M2055 1040L2050 1080 M2180 1070L2240 1040 2255 1075 2310 1070 2340 1030 M2450 1040L2500 1090 2480 1070 2460 1080 2490 1060 " +
  "M2500 1030L2510 1018 2600 1030 2670 1060 2700 1110 2770 1140 2800 1180 2850 1200 2870 1240 M2660 940L2710 900 M2685 1050L2710 1020 M2710 1105L2780 1120 M2725 1210L2740 1180 2725 1150 M2780 1080L2770 1120 " +
  "M2570 1335L2600 1290 2620 1300 M2575 1300L2620 1290 M2600 1280L2630 1250 M2610 1320L2600 1290 M2630 1250L2700 1170 M2640 1265L2700 1310 M2340 1325L2410 1340 M2330 1325L2325 1430 2340 1470 2360 1500 " +
  "M2990 1140V1210L3020 1230 M2990 1160L3030 1200 3020 1220 M2900 1225L2960 1220 3000 1260 3060 1255 3120 1290 3220 1265 M3000 1190L3070 1230 3120 1245 3210 1240 M3070 1200V1240 M3155 1180L3190 1190 3215 1240 M3160 1185L3200 1220 3210 1250 M3005 1260V1290 M3270 1270L3255 1490 M3210 1270L3290 1270 3370 1240 3400 1220 M3020 1330L3020 1360 2970 1380 M2925 1410L2935 1480 M3440 1445L3490 1410";

const BOUNDARIES =
  "M20 695L140 620 190 755 280 755 360 740 390 640 M420 680L430 770 M380 745L430 650 M290 50L350 80 430 100 M540 120L580 130 620 160 650 160 700 120 720 55 640 50 M500 230L590 190 680 220 M130 1090L150 1050 220 1060 260 950 220 810 M70 890L130 820 230 795 350 830 360 785 M200 1050L210 1130 M130 1080L160 1120 240 1130 M50 1140L90 1190 160 1200 210 1165 M1000 150L1060 150 1130 110 1220 150 M1010 100L1160 80 1145 20 M1120 320L1125 225 1230 235 M1120 320L1165 340 1180 380 1220 385 M1540 120L1535 280H1640L1650 200 M1660 150L1790 90 M910 180L925 240 M1910 220L1950 260 1940 300 1920 305 M1815 340V290L1860 290 M2735 240L2640 280 M3130 30V190L3090 200 3060 260 3140 300 3200 300 M3235 300V500 M3245 570L3225 650 3260 750 3400 730 3450 770 M3440 420L3480 400 M2455 1130L2440 1220 M3400 1210L3430 1110 M3450 780L3510 880 3580 890";

type Label = { x: number; y: number; text: string; rot?: number };

const EXITS: Label[] = [
  { x: 520, y: 57, text: "23A-B" }, { x: 773, y: 140, text: "19A" }, { x: 358, y: 228, text: "21" },
  { x: 150, y: 456, text: "21" }, { x: 690, y: 319, text: "18" }, { x: 655, y: 555, text: "18" },
  { x: 665, y: 1498, text: "16B" }, { x: 3100, y: 108, text: "28" }, { x: 3204, y: 258, text: "30" },
  { x: 3502, y: 200, text: "48" }, { x: 3442, y: 593, text: "30" }, { x: 3166, y: 646, text: "48" },
  { x: 3108, y: 766, text: "46" }, { x: 3526, y: 738, text: "32" }, { x: 3080, y: 886, text: "46B" },
  { x: 3045, y: 1008, text: "46A" }, { x: 2746, y: 1467, text: "45B" },
];

const TOWNS: Label[] = [
  { x: 552, y: 420, text: "Northlake" }, { x: 1215, y: 530, text: "Croft" }, { x: 2104, y: 890, text: "Mallard" },
  { x: 1556, y: 1475, text: "Graceshire" }, { x: 2874, y: 1324, text: "University City" },
];

const SIDE_ROADS: Label[] = [
  { x: 1387, y: 294, text: "Hucks Road", rot: 6 },
  { x: 1095, y: 693, text: "Lakeview Road", rot: 1 },
  { x: 580, y: 1023, text: "Reames Road", rot: -87 },
];

const MAIN_ROADS: Label[] = [
  { x: 1256, y: 298, text: "Old Statesville Road", rot: -86 },
  { x: 685, y: 438, text: "I-77 North", rot: -79 },
  { x: 625, y: 673, text: "I-77 South", rot: 88 },
  { x: 651, y: 1030, text: "I-77 North", rot: 88 },
  { x: 652, y: 1328, text: "I 77 Express Lanes", rot: 88 },
  { x: 3348, y: 408, text: "Jeff Gordon Expressway", rot: -51 },
];

type Shield = { x: number; y: number; w: number; text: string; fill: string; edge: string; ink: string };

const SHIELDS: Shield[] = [
  { x: 780, y: 782, w: 156, text: "US 21", fill: "#f6e3cf", edge: "#d3b295", ink: "#5a4630" },
  { x: 1496, y: 861, w: 156, text: "NC 24", fill: "#f6e3cf", edge: "#d3b295", ink: "#5a4630" },
  { x: 1158, y: 1010, w: 184, text: "NC 115", fill: "#f6e3cf", edge: "#d3b295", ink: "#5a4630" },
  { x: 664, y: 1150, w: 132, text: "I 77", fill: "#ebc8d0", edge: "#cf8a9c", ink: "#8f2440" },
  { x: 1588, y: 372, w: 132, text: "2481", fill: "#f1f1d6", edge: "#c6c79c", ink: "#55562e" },
  { x: 1858, y: 1235, w: 132, text: "2494", fill: "#f1f1d6", edge: "#c6c79c", ink: "#55562e" },
  { x: 1208, y: 1537, w: 132, text: "2519", fill: "#f1f1d6", edge: "#c6c79c", ink: "#55562e" },
  { x: 373, y: 1166, w: 132, text: "2111", fill: "#f3f3f3", edge: "#c9c9c9", ink: "#555" },
  { x: 133, y: 1402, w: 132, text: "2046", fill: "#f3f3f3", edge: "#c9c9c9", ink: "#555" },
  { x: 1496, y: 1226, w: 132, text: "2493", fill: "#f3f3f3", edge: "#c9c9c9", ink: "#555" },
];

/* Pairs of tree marks that stand in the woods */
const TREES: [number, number][] = [
  [85, 30], [715, 110], [580, 150], [1205, 105], [3262, 100], [3385, 90], [3530, 100], [3560, 230],
  [3277, 590], [3397, 630], [3313, 735], [3040, 720], [3525, 330], [1743, 245], [1723, 365], [1990, 385],
  [45, 1190], [130, 1280], [1210, 1125], [1335, 1115], [1390, 1270], [1475, 1360], [2777, 875], [3360, 885],
  [3425, 790], [3530, 1120], [3310, 1360], [3135, 1180], [3320, 1250], [975, 900], [860, 1080], [1740, 1130],
];

function Road({ set, fill, edge }: { set: RoadClass; fill: string; edge: string }) {
  const d = rounded(set.paths.join(" "));
  return (
    <g fill="none" strokeLinecap="round" strokeLinejoin="round">
      <path d={d} stroke={edge} strokeWidth={set.casing} />
      <path d={d} stroke={fill} strokeWidth={set.width} />
    </g>
  );
}

function StreetMap() {
  return (
    <svg viewBox="9 18 3582 1536" preserveAspectRatio="xMidYMid slice" className="block h-full w-full" role="img" aria-label="Street map of north Charlotte">
      <defs>
        <clipPath id="tile"><rect width="901" height="781" /></clipPath>
        <path id="prosperity" d="M2204 212Q2215 270 2265 305L2345 360Q2385 410 2414 520L2430 580" />
        <path id="lakeview" d="M238 1072L334 974Q355 957 405 953L460 930" />
        <path id="ridge" d="M3185 165L3380 284" />
        <path id="gibbon" d="M994 1374L1220 1542" />
        <path id="dearmon" d="M1824 64L1960 12" />
        <path id="mahler" d="M2680 10Q2740 60 2764 170L2768 200" />
      </defs>
      {TILES.map((t) => {
        const streets = rounded(t.streets);
        return (
          <g key={`${t.x}-${t.y}`} transform={`translate(${t.x} ${t.y})`} clipPath="url(#tile)">
            <rect width="901" height="781" fill={t.base} />
            {t.areas.map(([fill, d], i) => (
              <path key={i} d={d} fill={fill} stroke={fill} strokeWidth="6" strokeLinejoin="round" />
            ))}
            <g fill="none" strokeLinecap="round" strokeLinejoin="round">
              <path d={streets} stroke="#cdcbcb" strokeWidth="9" />
              <path d={streets} stroke="#fff" strokeWidth="6" />
            </g>
          </g>
        );
      })}
      <path d="M1485 280L1540 118 1580 165 1655 120 1695 200 1645 270 1630 345" fill="none" stroke="#8fc487" strokeWidth="9" />
      <path d="M2625 28V92M2594 60H2656" stroke={PARK} strokeWidth="5" />
      <path d="M2335 1545L2380 1500 2460 1510 2500 1470 2550 1455 2570 1420 2640 1400" fill="none" stroke={PARK} strokeWidth="16" />
      <path d="M2480 1050L2520 1022 2600 1035 2680 1090 2770 1140 2830 1180 2860 1230 2950 1222 3010 1260 3120 1290 3170 1320" fill="none" stroke="#b5e8cb" strokeWidth="14" />
      <g fill="none" stroke="#8aa783" strokeWidth="3">
        {TREES.map(([x, y]) => (
          <path key={`${x}-${y}`} d={`M${x - 10} ${y + 20}V${y}a9 11 0 1 1 1 0M${x + 10} ${y + 20}V${y + 8}h-9l9-25 9 25h-9`} />
        ))}
      </g>
      <path d={BOUNDARIES} fill="none" stroke="#a98aa9" strokeWidth="5" strokeDasharray="16 7 5 7" opacity="0.75" />
      <Road set={TERTIARY} fill="#ffffff" edge="#b4b2b2" />
      <Road set={SECONDARY} fill="#f5f8bb" edge="#b0b56c" />
      <Road set={PRIMARY} fill="#fbcf9e" edge="#c39558" />
      <Road set={RAMPS} fill="#e792a4" edge="#dc5a80" />
      <Road set={MOTORWAY} fill="#e792a4" edge="#db5f82" />
      <path d="M3240 290L3400 520M3450 250L3260 490" fill="none" stroke="#9c4460" strokeWidth="4" strokeDasharray="30 60" />
      <path d="M232 282L290 360" stroke="#fbcf9e" strokeWidth="20" />
      <path d="M3000 855L3100 885 3130 893" fill="none" stroke="#f5f8bb" strokeWidth="19" />
      <g fill="none">
        <path d={RAIL.join(" ")} stroke="#6f6f6f" strokeWidth="12" />
        <path d={RAIL[0]} stroke="#e4e0e4" strokeWidth="5" strokeDasharray="22 22" />
        <path d="M3168 1366H3200Q3215 1368 3235 1402Q3250 1440 3280 1443L3356 1449M3055 1483L3145 1383" stroke="#666" strokeWidth="9" />
      </g>
      <path d="M3309 1434h24v24h-24zM3042 1480h24v24h-24z" fill="#7b83b8" />
      <path d={rounded(FOOTPATHS)} fill="none" stroke="#4343f5" strokeWidth="6" strokeDasharray="6 9" />

      <g fontFamily="'Noto Sans', sans-serif" textAnchor="middle" strokeLinejoin="round">
        <g fontSize="32" fill="#222" stroke="#f5f8bb" strokeWidth="4" paintOrder="stroke">
          {SIDE_ROADS.map((r) => (
            <text key={r.text} transform={`translate(${r.x} ${r.y}) rotate(${r.rot ?? 0})`}>{r.text}</text>
          ))}
          <g textAnchor="start">
            <text><textPath href="#prosperity">Prosperity Church Road</textPath></text>
            <text><textPath href="#lakeview">Lakeview Road</textPath></text>
            <text><textPath href="#ridge">Ridge Road</textPath></text>
            <text><textPath href="#gibbon">Gibbon Road</textPath></text>
            <text><textPath href="#dearmon">DeArm</textPath></text>
            <text><textPath href="#mahler">ahler Road</textPath></text>
          </g>
        </g>
        <g fontSize="32" fill="#222">
          {MAIN_ROADS.map((r) => (
            <text key={`${r.text}-${r.y}`} transform={`translate(${r.x} ${r.y}) rotate(${r.rot ?? 0})`}>{r.text}</text>
          ))}
        </g>
        <g fontSize="40" fontStyle="italic" fill="#a8203c" stroke="#fff" strokeOpacity="0.7" strokeWidth="6" paintOrder="stroke">
          {EXITS.map((e) => (
            <text key={`${e.text}-${e.x}`} x={e.x} y={e.y}>{e.text}</text>
          ))}
        </g>
        <g fontSize="48" fill="#333" stroke="#fff" strokeOpacity="0.65" strokeWidth="8" paintOrder="stroke">
          {TOWNS.map((t) => (
            <text key={t.text} x={t.x} y={t.y}>{t.text}</text>
          ))}
          <text x="3580" y="1268" fontSize="36" fontStyle="italic">C</text>
        </g>
        <text x="1490" y="504" fontSize="40" fontStyle="italic" fill="#777" stroke="#fff" strokeOpacity="0.6" strokeWidth="6" paintOrder="stroke">Davis Lake</text>
        <g fontSize="48" fontStyle="italic" fill="#7a3b3d" stroke="#fff" strokeOpacity="0.6" strokeWidth="6" paintOrder="stroke">
          <text x="2612" y="1101">University</text>
          <text x="2612" y="1158">Research</text>
          <text x="2612" y="1215">Park</text>
        </g>
        {SHIELDS.map((s) => (
          <g key={s.text}>
            <rect x={s.x - s.w / 2} y={s.y - 33} width={s.w} height="66" rx="7" fill={s.fill} stroke={s.edge} strokeWidth="4" />
            <text x={s.x} y={s.y + 14} fontSize="40" fill={s.ink}>{s.text}</text>
          </g>
        ))}
      </g>
    </svg>
  );
}

function Pin({ className, hole, outline }: { className: string; hole: string; outline?: string }) {
  return (
    <svg viewBox="0 0 36 50" className={className} aria-hidden="true">
      <path
        d="M18 1C9 1 1 8 1 18c0 9 8 16 17 31 9-15 17-22 17-31C35 8 27 1 18 1Z"
        fill="#ff453f"
        stroke={outline ?? "none"}
        strokeWidth={outline ? 5 : 0}
        paintOrder="stroke"
      />
      <circle cx="18" cy="18" r={outline ? 9 : 6} fill={hole} />
    </svg>
  );
}

export default function App() {
  return (
    <div className="min-h-screen bg-[#0b132a] pr-1 font-['Inter',sans-serif] text-[21px] text-[#e6d3ab]">
      <header className="flex items-center justify-center gap-4 pt-6">
        <span className="flex size-[54px] items-center justify-center rounded-full bg-[#60c1ea]">
          <Pin className="mb-1 h-7 w-5" hole="#e6d3ab" />
        </span>
        <h1 className="pt-0.5 text-[40px] leading-[51px] font-extrabold text-[#60c1ea]">IP Address Tracker</h1>
      </header>

      <main className="flex flex-col items-center gap-8 px-4 pt-16 pb-[89px]">
        <form className="flex w-full max-w-[598px] gap-[11px]" onSubmit={(e) => e.preventDefault()}>
          <input
            type="text"
            aria-label="Search IP or domain"
            placeholder="Search IP or domain"
            className="h-[55px] min-w-0 flex-1 rounded-md border border-[#55534f] bg-transparent px-[22px] outline-none placeholder:text-[#78716c]"
          />
          <button type="submit" className="h-[55px] w-[115px] rounded-[5px] bg-linear-to-r from-[#9fc54d] to-[#60c1ea] font-bold text-[#0b132a]">
            Search
          </button>
        </form>

        <section className="w-full max-w-4xl rounded-xl border border-[#465c33] bg-[#0a1229] px-8 pt-[33px] pb-[31px] leading-8 shadow-lg">
          {DETAILS.map((d) => (
            <p key={d.label}>
              <strong className="font-semibold text-[#60c1ea]">{d.label}</strong> {d.value}
            </p>
          ))}
        </section>

        <section className="relative h-[512px] w-full max-w-[1194px] overflow-hidden rounded" aria-label="Map">
          <StreetMap />
          <Pin className="absolute top-[199px] left-1/2 h-[50px] w-9 -translate-x-1/2 overflow-visible" hole="#fff" outline="#fff" />
          <div className="absolute top-3.5 left-3.5 flex flex-col overflow-hidden rounded border border-black/25 bg-clip-padding text-black">
            <button type="button" aria-label="Zoom in" className="h-10 w-10 border-b border-[#ccc] bg-white text-[30px] leading-10 font-bold">+</button>
            <button type="button" aria-label="Zoom out" className="h-10 w-10 bg-white text-[30px] leading-10 font-bold">−</button>
          </div>
          <div className="absolute right-0 bottom-0 flex h-[22px] items-center gap-1 bg-white/80 px-[7px] font-['Liberation_Sans',sans-serif] text-base leading-[22px] text-[#333]">
            <a href="#leaflet" className="flex items-center gap-1 text-[#0078a8]">
              <svg viewBox="0 0 16 11" className="h-[11px] w-4" aria-hidden="true">
                <path fill="#4c7be1" d="M0 0h16v6H0z" />
                <path fill="#ffd500" d="M0 6h16v5H0z" />
              </svg>
              Leaflet
            </a>
            <span aria-hidden="true">|</span>
            <span>©</span>
            <a href="#openstreetmap" className="text-[#0078a8]">OpenStreetMap</a>
          </div>
        </section>
      </main>
    </div>
  );
}
